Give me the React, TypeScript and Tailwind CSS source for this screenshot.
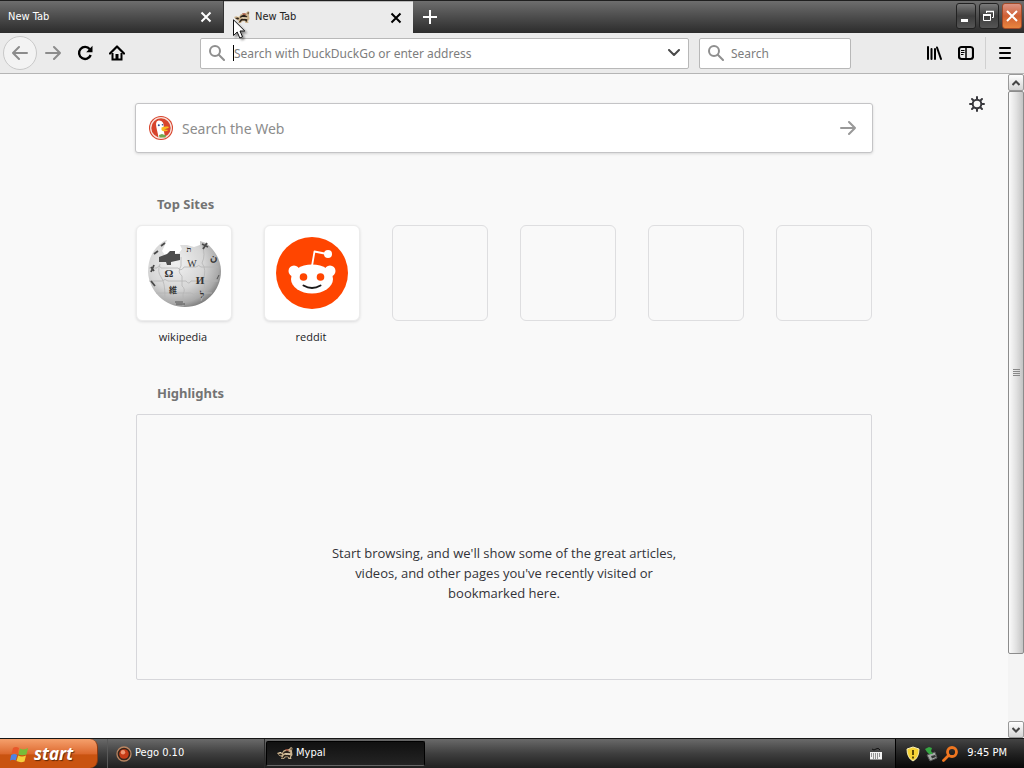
import React from "react";

const ui = "font-['DejaVu_Sans_Condensed','DejaVu_Sans',sans-serif]";

function Raccoon({ className }: { className?: string }) {
  return (
    <svg viewBox="0 0 16 16" className={className} aria-hidden="true">
      <path d="M0 7 L3 6 L5 7 L6.500 4.500 L9 3.500 L12 3 L14 1 L15.500 2 L15 5 L15.500 9 L14 11 L14.500 13 L11.500 13 L10.500 11 L8 11.500 L7 13 L4 13 L5 11 L2 9.500 Z" fill="#cdb48e" />
      <path d="M1 8 L4 7.500 L5.500 9 L3.500 9.500 Z M6.500 6 L10 4.500 L13.500 6.500 L12 7.500 L8 7 L6 8 Z M7 9 L11 8.500 L13.500 9.500 L12.500 12 L11 10.500 L8 10.500 L6 12.500 L5 12 Z" fill="#2b2119" />
      <path d="M8 3.500 L11 3.500 L12.500 4.500 L9 4.500 Z" fill="#9a2f22" />
      <path d="M8 7.500 L12 7.500 L13 8.500 L9 8.500 Z M2 6.500 L4 6 L4.500 7 Z" fill="#fff4d8" />
      <path d="M13 3 L15 2 L14.500 4.500 Z" fill="#5c4630" />
    </svg>
  );
}

function Cross({ className }: { className?: string }) {
  return (
    <svg viewBox="0 0 12 12" className={className} fill="none" stroke="currentColor" strokeWidth="2" aria-hidden="true">
      <path d="M1.500 1.500 L10.500 10.500 M10.500 1.500 L1.500 10.500" />
    </svg>
  );
}

function Magnifier({ className }: { className?: string }) {
  return (
    <svg viewBox="0 0 16 16" className={className} fill="none" stroke="currentColor" strokeWidth="2" strokeLinecap="round" aria-hidden="true">
      <circle cx="6" cy="6" r="5" />
      <path d="M9.800 9.800 L15 15" />
    </svg>
  );
}

function ArrowRight({ className }: { className?: string }) {
  return (
    <svg viewBox="0 0 16 16" className={className} fill="none" stroke="currentColor" strokeWidth="2" strokeLinecap="round" strokeLinejoin="round" aria-hidden="true">
      <path d="M1 8 H15 M9 2 L15 8 L9 14" />
    </svg>
  );
}

function TitleBar() {
  return (
    <header className="relative flex h-[33px] shrink-0 border-t border-[#1f1f1f] bg-linear-to-b from-[#6e6e6e] via-[#4c4c4c] to-[#2c2c2c] text-[11px]">
      <div className="flex w-56 items-center justify-between border-r border-[#333] pr-[11px] pl-2 text-white">
        <span>New Tab</span>
        <button aria-label="Close tab"><Cross className="size-3" /></button>
      </div>
      <div className="flex w-[189px] items-center border-t border-[#bbb] bg-[#ebebeb] pr-[11px] pl-[10px] text-[#222]">
        <Raccoon className="size-4" />
        <span className="ml-[5px] grow">New Tab</span>
        <button aria-label="Close tab" className="text-black"><Cross className="size-3" /></button>
      </div>
      <button aria-label="Open a new tab" className="flex w-8 items-center justify-center pl-[2px] text-white">
        <svg viewBox="0 0 14 14" className="size-[14px]" stroke="currentColor" strokeWidth="2" aria-hidden="true"><path d="M7 0 V14 M0 7 H14" /></svg>
      </button>
      <div className="ml-auto flex gap-[3px] pt-[2px] pr-[2px]">
        <button aria-label="Minimize" className="h-[26px] w-5 rounded-[3px] border border-[#222] bg-linear-to-b from-[#7a7a7a] via-[#3e3e3e] to-[#555]">
          <svg viewBox="0 0 18 24" className="h-6 w-[18px]" aria-hidden="true"><path d="M4 15 H11 V18 H4 Z" fill="#fff" /></svg>
        </button>
        <button aria-label="Restore" className="h-[26px] w-5 rounded-[3px] border border-[#222] bg-linear-to-b from-[#7a7a7a] via-[#3e3e3e] to-[#555]">
          <svg viewBox="0 0 18 24" className="h-6 w-[18px]" fill="none" stroke="#fff" aria-hidden="true">
            <path d="M6.500 9 V7.500 H13.500 V13.500 H12" /><path d="M6 7.500 H14" strokeWidth="1.500" />
            <path d="M3.500 10.500 H10.500 V16.500 H3.500 Z" /><path d="M3 11 H11" strokeWidth="2" />
          </svg>
        </button>
        <button aria-label="Close" className="h-[26px] w-5 rounded-[3px] border border-[#a04a28] bg-linear-to-b from-[#dc9483] via-[#cf5f33] to-[#e8853f]">
          <svg viewBox="0 0 18 24" className="h-6 w-[18px]" stroke="#fff" strokeWidth="2" aria-hidden="true"><path d="M4 7 L14 17 M14 7 L4 17" /></svg>
        </button>
      </div>
      <svg viewBox="0 0 13 21" className="pointer-events-none absolute top-[18px] left-[233px] z-10 h-[21px] w-[13px] drop-shadow-[2px_2px_1px_#0006]" aria-hidden="true">
        <path d="M0.500 0.800 V16.500 L4.200 13 L6.800 19 L9.500 17.800 L7 12 H11.800 Z" fill="#fff" stroke="#111" />
      </svg>
    </header>
  );
}

function NavBar() {
  return (
    <nav className="flex h-[41px] shrink-0 items-center border-b border-[#b5b5b5] bg-[#ebebeb] text-xs text-black">
      <button aria-label="Back" className="ml-[3px] flex size-[34px] items-center justify-center rounded-full border border-[#c9c9c9] bg-[#f3f3f3] text-[#8c8c8c]">
        <ArrowRight className="size-4 rotate-180" />
      </button>
      <button aria-label="Forward" className="flex w-8 justify-center text-[#8c8c8c]"><ArrowRight className="size-4" /></button>
      <button aria-label="Reload" className="flex w-8 justify-center">
        <svg viewBox="0 0 16 16" className="size-4" fill="none" stroke="currentColor" strokeWidth="2.400" aria-hidden="true">
          <path d="M12.800 4.200 A6 6 0 1 0 13.700 10" /><path d="M15.500 0.800 V7.200 H9.200 Z" fill="currentColor" stroke="none" />
        </svg>
      </button>
      <button aria-label="Home" className="flex w-8 justify-center">
        <svg viewBox="0 0 16 16" className="size-4" aria-hidden="true">
          <path d="M1 8.500 L8 1.500 L15 8.500" fill="none" stroke="currentColor" strokeWidth="2.200" strokeLinecap="round" strokeLinejoin="round" />
          <path d="M3.500 8 V14.500 H12.500 V8" fill="none" stroke="currentColor" strokeWidth="2" />
          <path d="M6.500 14.500 V9 H9.500 V14.500 Z" fill="currentColor" />
        </svg>
      </button>
      <div className="relative ml-[67px] flex h-[31px] grow items-center rounded-xs border border-[#b8b8b8] bg-white pr-2 pl-2">
        <Magnifier className="size-4 text-[#8f8f8f]" />
        <span className="ml-2 h-4 w-px bg-black" />
        <input aria-label="Address" placeholder="Search with DuckDuckGo or enter address" className="h-6 min-w-0 grow font-['Noto_Sans',sans-serif] text-xs outline-none placeholder:text-[#7d7d7d]" />
        <button aria-label="Show history" className="text-[#4a4a4a]">
          <svg viewBox="0 0 12 8" className="h-2 w-3" fill="none" stroke="currentColor" strokeWidth="2" strokeLinecap="round" strokeLinejoin="round" aria-hidden="true"><path d="M1 1 L6 6 L11 1" /></svg>
        </button>
      </div>
      <label className="ml-[10px] flex h-[31px] w-[152px] items-center gap-[7px] rounded-xs border border-[#b8b8b8] bg-white px-2">
        <Magnifier className="size-4 shrink-0 text-[#8f8f8f]" />
        <input aria-label="Search" placeholder="Search" className="h-6 w-full min-w-0 font-['Noto_Sans',sans-serif] text-xs outline-none placeholder:text-[#7d7d7d]" />
      </label>
      <button aria-label="Library" className="ml-[67px] flex w-8 justify-center">
        <svg viewBox="0 0 16 16" className="size-4" stroke="currentColor" strokeWidth="2" strokeLinecap="round" aria-hidden="true">
          <path d="M2 2 V14 M5.500 4 V14 M9 4 V14" /><path d="M11 2.500 L15 14" />
        </svg>
      </button>
      <button aria-label="Sidebars" className="flex w-8 justify-center">
        <svg viewBox="0 0 16 16" className="size-4" fill="none" stroke="currentColor" aria-hidden="true">
          <rect x="1" y="2" width="14" height="12" rx="2.500" strokeWidth="2.200" /><path d="M8 2 V14" strokeWidth="1.500" /><path d="M3 5.500 H6.500 M3 7.500 H6.500 M3 9.500 H5.500" />
        </svg>
      </button>
      <span className="ml-[3px] h-8 w-px bg-[#d0d0d0]" />
      <button aria-label="Open menu" className="flex w-[38px] justify-center">
        <svg viewBox="0 0 12 12" className="size-3" stroke="currentColor" strokeWidth="2" strokeLinecap="round" aria-hidden="true"><path d="M1 1 H11 M1 6 H11 M1 11 H11" /></svg>
      </button>
    </nav>
  );
}

function Duck() {
  return (
    <svg viewBox="0 0 24 24" className="size-6 shrink-0" aria-hidden="true">
      <circle cx="12" cy="12" r="12" fill="#d8442c" />
      <circle cx="12" cy="12" r="10.300" fill="none" stroke="#f7e2dc" strokeWidth="1.300" />
      <path d="M7.500 6 C8.500 3.800 12.500 4 13.800 6.500 C15 8.500 14.800 11 14.500 13 L16 21 C14 22 11 22 9.500 21.500 C9 17 7 11.500 7 8 Z" fill="#fff" />
      <path d="M12.500 11.500 C15 10.500 18 10.300 20 11 C19.500 12.500 16.500 12.800 15 13.300 C16.500 14 18.500 13.500 19 14.200 C17.500 15.800 13.500 15.500 12.500 14 Z" fill="#f9b91e" />
      <path d="M10 19 L13 18 L17 19.500 L16.500 21.500 L10.500 21.500 Z" fill="#71a84e" />
      <circle cx="9.800" cy="9.200" r="1" fill="#2d4f8e" /><circle cx="13.500" cy="8.800" r="0.800" fill="#2d4f8e" />
    </svg>
  );
}

function Wikipedia() {
  return (
    <svg viewBox="0 0 74 72" className="h-[72px] w-[74px]" aria-hidden="true">
      <defs>
        <radialGradient id="globe" cx="0.380" cy="0.350" r="0.700">
          <stop offset="0" stopColor="#f1f1f1" /><stop offset="0.550" stopColor="#d6d6d6" /><stop offset="0.850" stopColor="#aaa" /><stop offset="1" stopColor="#777" />
        </radialGradient>
      </defs>
      <path d="M17 4 L20 3 L17 10 L15 14 L18 18 L32 16 L35 12 L33 8 L40 8 L47 10 L53 8 L53 4 L59 6 C68 13 74 23 74 34 C74 54 58 70 38 70 C18 70 2 54 1 35 C1 22 6 11 17 4 Z" fill="url(#globe)" />
      <path d="M12 20 L20 17 L23 14 L28 14 L28 17 L33 17 L33 23 L24 25 L24 28 L20 28 L19 25 L12 25 Z" fill="#4d4d4d" />
      <g fill="none" stroke="#b5b5b5" strokeWidth="0.800">
        <path d="M2 31 H10 Q12 27 14 31 H31 Q34 35 37 30 H49 Q52 27 54 30 H71 M2 44 H15 Q18 41 21 44 H39 Q42 48 44 44 H71 M9 56 H24 Q27 53 30 56 H44 Q47 59 50 56 H65" />
        <path d="M13 27 Q10 35 14 40 T18 60 M34 20 V29 Q30 35 35 39 V49 Q39 52 36 57 V69 M55 8 Q59 18 55 26 Q60 33 56 43 Q60 51 54 64" />
      </g>
      <g fill="#333" fontFamily="Liberation Serif, serif" textAnchor="middle">
        <text x="22" y="40" fontSize="11" fontWeight="700">Ω</text>
        <text x="45" y="30" fontSize="10">W</text>
        <text x="53" y="47" fontSize="11" fontWeight="700">И</text>
        <text x="26" y="56" fontSize="8" fontFamily="Noto Sans CJK JP, sans-serif" fontWeight="700">維</text>
        <text x="55" y="61" fontSize="9" fontWeight="700">ל</text>
        <text x="66" y="24" fontSize="10" fontWeight="700">ن</text>
        <text x="42" y="15" fontSize="8" fontWeight="700">ת</text>
      </g>
      <g stroke="#4a4a4a" fill="none" strokeWidth="1.800">
        <path d="M55 7 L61 10 M60 6 L56 12 M7 17 L11 14 M14 9 L18 6 M4 30 L7 34 M7 28 L4 35 M4 44 L8 49" />
        <path d="M28 65 H36 M29 67 L38 67 M70 42 L72 38" strokeWidth="0.900" />
      </g>
    </svg>
  );
}

function Reddit() {
  return (
    <svg viewBox="0 0 72 72" className="size-[72px]" aria-hidden="true">
      <circle cx="36" cy="36" r="36" fill="#ff4500" />
      <g fill="#fff">
        <circle cx="18" cy="34" r="5.500" /><circle cx="54" cy="34" r="5.500" />
        <ellipse cx="36" cy="42" rx="21" ry="14.500" /><circle cx="52" cy="17" r="4" />
        <path d="M36 29 L38.500 14.500 L51 17" fill="none" stroke="#fff" strokeWidth="1.800" strokeLinejoin="round" />
      </g>
      <circle cx="27.500" cy="40" r="3.800" fill="#ff4500" /><circle cx="44.500" cy="40" r="3.800" fill="#ff4500" />
      <path d="M27.500 48.500 Q36 53.500 44.500 48.500" fill="none" stroke="#1b1b1b" strokeWidth="2" strokeLinecap="round" />
    </svg>
  );
}

const sites = [
  { name: "wikipedia", icon: <Wikipedia /> },
  { name: "reddit", icon: <Reddit /> },
];

function NewTabPage() {
  return (
    <main className="relative grow bg-[#f9f9f9] font-['Noto_Sans',sans-serif]">
      <button aria-label="Customize your New Tab page" className="absolute top-[22px] right-[23px] text-[#38383d]">
        <svg viewBox="0 0 16 16" className="size-4" fill="none" stroke="currentColor" strokeWidth="2" strokeLinecap="round" aria-hidden="true">
          <circle cx="8" cy="8" r="4.300" />
          <path d="M8 1 V3 M8 13 V15 M1 8 H3 M13 8 H15 M3 3 L4.500 4.500 M11.500 11.500 L13 13 M3 13 L4.500 11.500 M11.500 4.500 L13 3" />
        </svg>
      </button>
      <div className="mx-auto w-full max-w-[738px] pt-[29px] pb-14">
        <form className="flex h-[50px] items-center rounded-[3px] border border-[#c4c4c6] bg-white px-[13px] shadow-[0_1px_3px_#0002]">
          <Duck />
          <input aria-label="Search the Web" placeholder="Search the Web" className="ml-[9px] h-8 min-w-0 grow text-sm outline-none placeholder:text-[#8c8c8c]" />
          <button type="button" aria-label="Submit search" className="text-[#999]"><ArrowRight className="mr-[3px] size-4" /></button>
        </form>
        <section className="px-px pt-[39px]">
          <h2 className="pl-[21px] text-[13px] leading-6 font-bold text-[#737373]">Top Sites</h2>
          <ul className="mt-[9px] grid grid-cols-6 gap-8">
            {sites.map((s) => (
              <li key={s.name}>
                <a href="#" className="block text-center text-[11px] leading-4 text-[#1c1c1f]">
                  <span className="flex aspect-square items-center justify-center rounded-md border border-[#ececec] bg-white shadow-[0_1px_3px_#0c0c0d1f]">{s.icon}</span>
                  <span className="mt-2 block pr-[2px] font-['Open_Sans',sans-serif]">{s.name}</span>
                </a>
              </li>
            ))}
            {[0, 1, 2, 3].map((n) => (
              <li key={n} className="aspect-square self-start rounded-md border border-[#dedee0]" />
            ))}
          </ul>
        </section>
        <section className="px-px pt-9">
          <h2 className="pl-[21px] text-[13px] leading-6 font-bold text-[#737373]">Highlights</h2>
          <div className="mt-[9px] flex h-[266px] justify-center rounded-xs border border-[#d7d7db] pt-32">
            <p className="w-[350px] text-center font-['Open_Sans',sans-serif] text-[13px] leading-5 text-[#333338]">
              Start browsing, and we'll show some of the great articles, videos, and other pages you've recently visited or bookmarked here.
            </p>
          </div>
        </section>
      </div>
    </main>
  );
}

function ScrollButton({ label, down }: { label: string; down?: boolean }) {
  return (
    <button aria-label={label} className="flex h-[17px] shrink-0 items-center justify-center rounded-xs border border-[#999] bg-linear-to-b from-white to-[#d4d4d4]">
      <svg viewBox="0 0 8 6" className={down ? "h-[6px] w-2 rotate-180" : "h-[6px] w-2"} fill="none" stroke="#444" strokeWidth="2" aria-hidden="true"><path d="M0.500 5 L4 1.500 L7.500 5" /></svg>
    </button>
  );
}

function ScrollBar() {
  return (
    <div className="flex w-4 shrink-0 flex-col bg-[#f4f4f4]">
      <ScrollButton label="Scroll up" />
      <div className="flex grow flex-col">
        <div className="flex grow-[563] items-center justify-center rounded-xs border border-[#8c8c8c] bg-linear-to-r from-[#fafafa] via-[#e2e2e2] to-[#c4c4c4]">
          <svg viewBox="0 0 7 8" className="h-2 w-[7px]" stroke="#888" aria-hidden="true"><path d="M0 0.500 H7 M0 2.500 H7 M0 4.500 H7 M0 6.500 H7" /></svg>
        </div>
        <div className="grow-[68]" />
      </div>
      <ScrollButton label="Scroll down" down />
    </div>
  );
}

function TaskBar() {
  return (
    <footer className="flex h-[30px] shrink-0 border-t border-[#161616] bg-linear-to-b from-[#6a6a6a] via-[#3f3f3f] to-[#202020] text-[11px] text-white">
      <button className="flex w-[98px] items-center rounded-r-lg border-r border-[#8a3a12] bg-linear-to-b from-[#f5a06c] from-0% via-[#dd6a2e] via-50% to-[#c95310] to-55% pl-[10px]">
        <svg viewBox="0 0 20 18" className="h-[18px] w-5" aria-hidden="true">
          <path d="M3 3 Q6 1 9 3 L7.500 9 Q5 7 1.500 9 Z" fill="#e8572a" />
          <path d="M10 3.500 Q14 5.500 18 3 L16.500 9.500 Q12 11 8.500 9.500 Z" fill="#78bd39" />
          <path d="M1.200 10 Q4.500 8 7.200 10 L5.700 15.500 Q3 14 0 15.500 Z" fill="#4f83e3" />
          <path d="M8.200 10.500 Q12 12.500 16 10.500 L14.500 16.500 Q10.500 18 6.500 16 Z" fill="#f5cf3c" />
        </svg>
        <span className="ml-1 font-['Open_Sans',sans-serif] text-[17px] leading-6 font-bold italic [text-shadow:1px_1px_1px_#0008]">start</span>
      </button>
      <button className="ml-[9px] flex w-[158px] items-center border-x border-[#2b2b2b] border-l-[#595959] pl-2">
        <svg viewBox="0 0 16 16" className="size-4" aria-hidden="true">
          <circle cx="8" cy="8" r="7" fill="#39251a" stroke="#b98662" strokeWidth="1.300" /><circle cx="8" cy="8" r="4.800" fill="#c63c17" /><circle cx="7" cy="6.300" r="2.200" fill="#ef9672" />
        </svg>
        <span className="ml-[3px]">Pego 0.10</span>
      </button>
      <button className="my-[2px] ml-px flex w-[159px] items-center rounded-xs border border-black border-b-[#666] bg-linear-to-b from-[#111] to-[#242424] pl-[10px]">
        <Raccoon className="size-4" />
        <span className="ml-[3px]">Mypal</span>
      </button>
      <div className="ml-auto flex items-center pr-3">
        <svg viewBox="0 0 14 12" className="h-3 w-[14px]" aria-hidden="true">
          <path d="M3 1 Q5 3 7 1 T11 2" fill="none" stroke="#111" /><rect x="1" y="4" width="12" height="7.500" fill="#f3f3f3" />
          <path d="M2 6 H12 M2 8 H12 M4 10 H10" stroke="#333" strokeDasharray="1 1" />
        </svg>
      </div>
      <div className="flex items-center border-l border-black bg-linear-to-b from-[#444] via-[#222] to-[#080808] pr-[17px] pl-[10px]">
        <svg viewBox="0 0 14 16" className="h-4 w-[14px]" aria-hidden="true">
          <path d="M7 1 L13 3 Q13 12 7 15 Q1 12 1 3 Z" fill="#f6d335" stroke="#f7eeb3" /><path d="M7 4 V9 M7 10.500 V12.500" stroke="#4a3a00" strokeWidth="1.800" />
        </svg>
        <svg viewBox="0 0 14 16" className="ml-1 h-4 w-[14px]" aria-hidden="true">
          <path d="M3 9 L11 6 L13 12 L6 15 Z" fill="#a5aba7" stroke="#555" /><path d="M7 10 L11 9 L12 11 L8 12.500 Z" fill="#333" />
          <path d="M1 3 L5 1 L8 2 L7 5 L9 8 L5 8 L3 6 Z" fill="#36a743" />
        </svg>
        <svg viewBox="0 0 16 16" className="ml-1 size-4" fill="none" stroke="#ef7620" strokeWidth="2.800" aria-hidden="true">
          <circle cx="10" cy="6" r="4.500" /><path d="M6.500 9.500 L1.500 14.500" strokeLinecap="round" />
        </svg>
        <time className="ml-[9px] whitespace-nowrap">9:45 PM</time>
      </div>
    </footer>
  );
}

export default function App() {
  return (
    <div className={`flex min-h-screen flex-col bg-[#f9f9f9] ${ui}`}>
      <TitleBar />
      <NavBar />
      <div className="flex grow">
        <NewTabPage />
        <ScrollBar />
      </div>
      <TaskBar />
    </div>
  );
}
